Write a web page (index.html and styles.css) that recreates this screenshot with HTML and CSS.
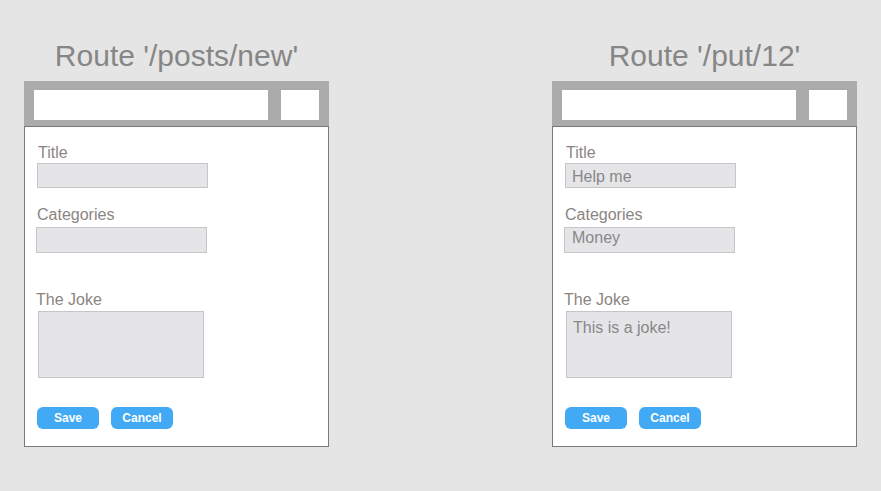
FILE: index.html
```html
<!DOCTYPE html>
<html lang="en">
<head>
<meta charset="utf-8">
<title>Routes</title>
<link rel="stylesheet" href="styles.css">
</head>
<body>
<main class="page">
  <section class="panel">
    <h1 class="route">Route '/posts/new'</h1>
    <div class="window">
      <div class="topbar">
        <div class="addr"></div>
        <div class="go"></div>
      </div>
      <form class="form">
        <label class="label label-title">Title</label>
        <input class="field field-title" type="text" value="">
        <label class="label label-cat">Categories</label>
        <input class="field field-cat" type="text" value="">
        <label class="label label-joke">The Joke</label>
        <textarea class="field area"></textarea>
        <div class="actions">
          <button type="button" class="btn">Save</button>
          <button type="button" class="btn">Cancel</button>
        </div>
      </form>
    </div>
  </section>
  <section class="panel">
    <h1 class="route">Route '/put/12'</h1>
    <div class="window">
      <div class="topbar">
        <div class="addr"></div>
        <div class="go"></div>
      </div>
      <form class="form">
        <label class="label label-title">Title</label>
        <input class="field field-title" type="text" value="Help me">
        <label class="label label-cat">Categories</label>
        <input class="field field-cat" type="text" value="Money">
        <label class="label label-joke">The Joke</label>
        <textarea class="field area">This is a joke!</textarea>
        <div class="actions">
          <button type="button" class="btn">Save</button>
          <button type="button" class="btn">Cancel</button>
        </div>
      </form>
    </div>
  </section>
</main>
</body>
</html>
```

FILE: styles.css
```css
html, body {
  margin: 0;
  padding: 0;
  background: #e5e5e5;
}

body {
  font-family: "Liberation Sans", Arial, sans-serif;
  width: 881px;
  height: 491px;
  overflow: hidden;
}

.page {
  display: flex;
  gap: 223px;
  padding-left: 24px;
}

.panel {
  width: 305px;
  display: flex;
  flex-direction: column;
}

.route {
  margin: 38px 0 7px 0;
  font-size: 30px;
  line-height: 36px;
  font-weight: normal;
  color: #868686;
  text-align: center;
}

.window {
  display: flex;
  flex-direction: column;
}

.topbar {
  background: #ababab;
  height: 45px;
  box-sizing: border-box;
  padding: 9px 10px 6px 10px;
  display: flex;
  gap: 13px;
}

.addr {
  flex: 1;
  background: #ffffff;
}

.go {
  width: 38px;
  background: #ffffff;
}

.form {
  margin: 0;
  background: #ffffff;
  border: 1px solid #7a7a7a;
  padding: 17px 12px 17px 12px;
  display: flex;
  flex-direction: column;
  align-items: flex-start;
}

.label {
  font-size: 16px;
  line-height: 18px;
  color: #8a8582;
}

.label-title { margin-left: 1px; }
.label-cat { margin-top: 18px; }
.label-joke { margin-top: 38px; margin-left: -1px; }

.field {
  box-sizing: border-box;
  margin: 0;
  background: #e5e5e8;
  border: 1px solid #c6c6ca;
  border-radius: 0;
  font-family: "Liberation Sans", Arial, sans-serif;
  font-size: 16px;
  color: #888888;
  outline: none;
  appearance: none;
}

.field-title {
  width: 171px;
  height: 25px;
  margin-top: 1px;
  padding: 2px 6px 0 6px;
}

.field-cat {
  width: 171px;
  height: 26px;
  margin-top: 3px;
  margin-left: -1px;
  padding: 0 6px 4px 7px;
}

.area {
  width: 166px;
  height: 67px;
  margin-top: 2px;
  margin-left: 1px;
  padding: 7px 6px;
  line-height: 18px;
  resize: none;
  overflow: hidden;
}

.actions {
  margin-top: 29px;
  display: flex;
  gap: 12px;
}

.btn {
  width: 62px;
  height: 22px;
  margin: 0;
  padding: 0;
  border: none;
  border-radius: 6px;
  background: #42aaf4;
  color: #ffffff;
  font-family: "Liberation Sans", Arial, sans-serif;
  font-size: 12px;
  font-weight: bold;
  line-height: 22px;
  text-align: center;
}
```
